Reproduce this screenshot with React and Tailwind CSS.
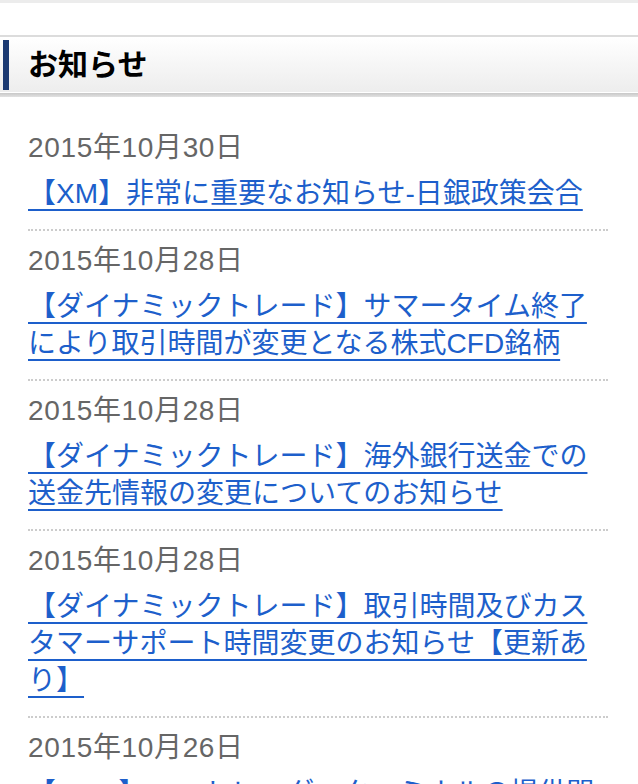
import React from 'react';

const NEWS = [
  {date: "2015年10月30日", title: "【XM】非常に重要なお知らせ-日銀政策会合"},
  {date: "2015年10月28日", title: "【ダイナミックトレード】サマータイム終了により取引時間が変更となる株式CFD銘柄"},
  {date: "2015年10月28日", title: "【ダイナミックトレード】海外銀行送金での送金先情報の変更についてのお知らせ"},
  {date: "2015年10月28日", title: "【ダイナミックトレード】取引時間及びカスタマーサポート時間変更のお知らせ【更新あり】"},
  {date: "2015年10月26日", title: "【FOM】MT4トレーダーターミナルの提供開始"},
];

const App = () => {
  return (
    <div className="w-[638px] h-[784px] overflow-hidden bg-white font-['Liberation_Sans','Noto_Sans_CJK_JP',sans-serif]">
      <div className="h-[3px] bg-[#ececec]"></div>
      <div className="h-[32px]"></div>

      <div className="border-t-2 border-[#dcdcdc]">
        <div className="flex h-[55px] items-center bg-gradient-to-b from-white to-[#ededed] pl-[3px]">
          <div className="h-[50px] w-[6px] bg-[#1c3a72]"></div>
          <h2 className="pl-[19px] text-[30px] font-bold text-black">お知らせ</h2>
        </div>
        <div className="h-px bg-white"></div>
        <div className="h-[4px] bg-gradient-to-b from-[#c8c8c8] to-[#e2e2e2]"></div>
      </div>

      <ul className="pl-[28px] pr-[30px] pt-[21px]">
        {NEWS.map((item, i) => (
          <li key={i} className="border-b-2 border-dotted border-[#cccccc] pt-[10px] pb-[17px]">
            <p className="text-[28px] leading-[40px] text-[#666666] tracking-[0.65px]">{item.date}</p>
            <a href="#" className="mt-[7px] block text-[28px] leading-[37px] text-[#1d5fcb]">
              <span className="underline underline-offset-[6px] decoration-[2px]">{item.title}</span>
            </a>
          </li>
        ))}
      </ul>
    </div>
  );
};

export default App;
